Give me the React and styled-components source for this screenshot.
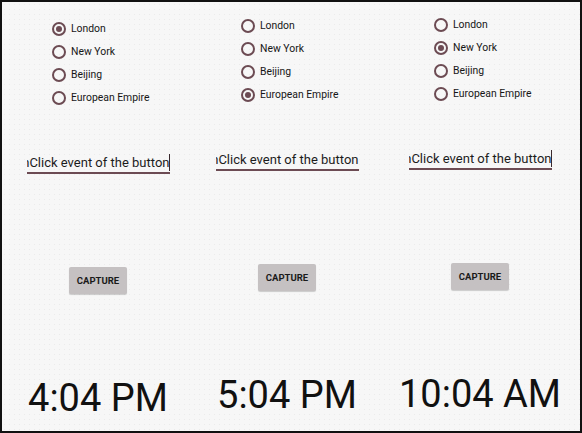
import React from "react"
import styled, { createGlobalStyle } from "styled-components"

const GlobalStyle = createGlobalStyle`
   html, body {
      margin: 0;
      padding: 0;
      background: #f7f7f7;
   }
   * {
      box-sizing: border-box;
   }
`;

const accent = "#6c4b53";

const Frame = styled.div`
   width: 582px;
   height: 433px;
   border: 2px solid #111;
   background-color: #f7f7f7;
   background-image: radial-gradient(#ebebeb 0.5px, transparent 0.7px);
   background-size: 5px 5px;
   display: grid;
   grid-template-columns: 192px 186px 200px;
   font-family: Roboto, "Noto Sans", sans-serif;
   color: #1c1c1c;
   overflow: hidden;
`;

const Screen = styled.div`
   display: flex;
   flex-direction: column;
   align-items: center;
   padding-top: ${p => 15 + p.dy}px;
`;

const RadioGroup = styled.div`
   display: flex;
   flex-direction: column;
   width: 92px;
`;

const RadioRow = styled.label`
   display: flex;
   align-items: center;
   gap: 5px;
   height: 23px;
   font-size: 10.4px;
   color: #161616;
   white-space: nowrap;
`;

const RadioDot = styled.span`
   width: 14px;
   height: 14px;
   border-radius: 50%;
   border: 2px solid ${accent};
   display: flex;
   align-items: center;
   justify-content: center;
   flex: none;
   &::after {
      content: "";
      width: 6px;
      height: 6px;
      border-radius: 50%;
      background: ${p => (p.checked ? accent : "transparent")};
   }
`;

const Field = styled.div`
   margin-top: 44px;
   width: 143px;
   height: 21px;
   border-bottom: 2px solid ${accent};
   display: flex;
   justify-content: flex-end;
   align-items: center;
   overflow: hidden;
   position: relative;
`;

const FieldText = styled.span`
   font-size: 13px;
   line-height: 18px;
   white-space: nowrap;
   color: #1c1c1c;
`;

const Caret = styled.span`
   position: absolute;
   right: 0;
   top: 1px;
   width: 1px;
   height: 17px;
   background: #3a2a2e;
`;

const CaptureButton = styled.button`
   margin-top: 93px;
   width: 58px;
   height: 27px;
   border: none;
   border-radius: 2px;
   background: #c5c1c2;
   box-shadow: 0 1px 1px rgba(0, 0, 0, 0.18);
   font-family: Roboto, "Noto Sans", sans-serif;
   font-weight: 700;
   font-size: 9.5px;
   color: #1a1a1a;
   padding: 0;
`;

const Clock = styled.div`
   margin-top: 82px;
   font-size: 38px;
   line-height: 45px;
   color: #111;
   white-space: nowrap;
`;

const cities = ["London", "New York", "Beijing", "European Empire"];

const screens = [
   { selected: 0, caret: true, time: "4:04 PM", dy: 0 },
   { selected: 3, caret: false, time: "5:04 PM", dy: -3 },
   { selected: 1, caret: true, time: "10:04 AM", dy: -4 },
];

const Phone = ({ selected, caret, time, dy }) => (
   <Screen dy={dy}>
      <RadioGroup>
         {cities.map((city, i) => (
            <RadioRow key={city}>
               <RadioDot checked={i === selected} />
               {city}
            </RadioRow>
         ))}
      </RadioGroup>
      <Field>
         <FieldText>nClick event of the button</FieldText>
         {caret && <Caret />}
      </Field>
      <CaptureButton>CAPTURE</CaptureButton>
      <Clock>{time}</Clock>
   </Screen>
);

export default function App() {
   return (
      <>
         <GlobalStyle />
         <Frame>
            {screens.map((s, i) => (
               <Phone key={i} {...s} />
            ))}
         </Frame>
      </>
   )
}
